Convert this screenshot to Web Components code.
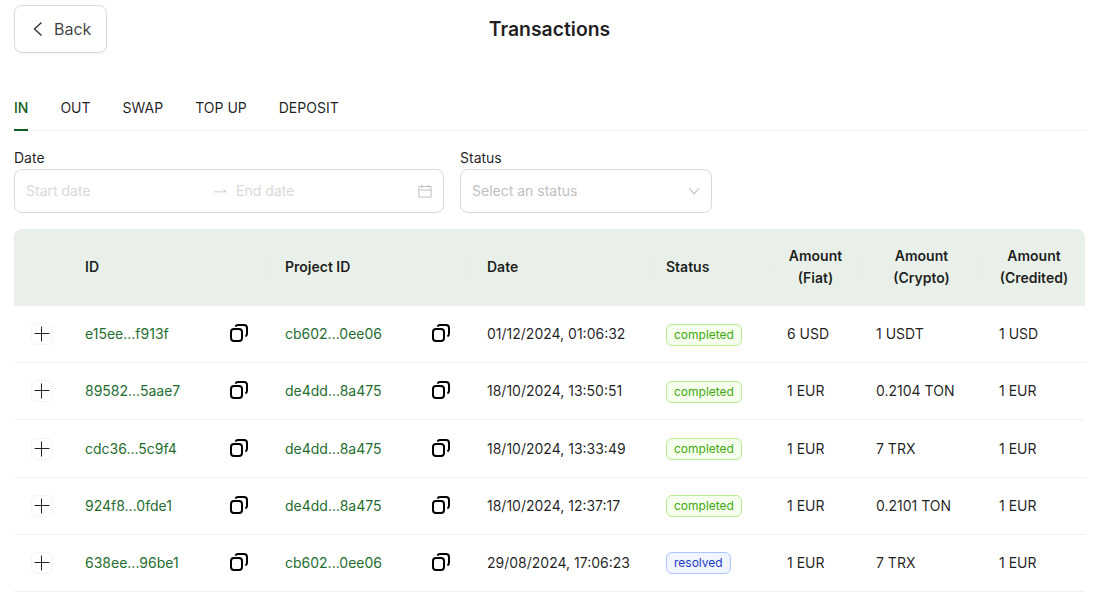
<!DOCTYPE html>
<html>
<head>
<meta charset="utf-8">
<title>Transactions</title>
<style>
  html, body { margin: 0; background: #fff; }
  body { font: 14px/22px Inter, "Liberation Sans", sans-serif; color: rgba(0, 0, 0, 0.88); overflow: hidden; }
</style>
</head>
<body>
<tx-page>
  <page-header title="Transactions"></page-header>
  <tab-bar tabs="IN,OUT,SWAP,TOP UP,DEPOSIT" active="IN"></tab-bar>
  <filter-bar></filter-bar>
  <tx-table>
    <tx-row tx="e15ee...f913f" project="cb602...0ee06" date="01/12/2024, 01:06:32" status="completed" fiat="6 USD" crypto="1 USDT" credited="1 USD"></tx-row>
    <tx-row tx="89582...5aae7" project="de4dd...8a475" date="18/10/2024, 13:50:51" status="completed" fiat="1 EUR" crypto="0.2104 TON" credited="1 EUR"></tx-row>
    <tx-row tx="cdc36...5c9f4" project="de4dd...8a475" date="18/10/2024, 13:33:49" status="completed" fiat="1 EUR" crypto="7 TRX" credited="1 EUR"></tx-row>
    <tx-row tx="924f8...0fde1" project="de4dd...8a475" date="18/10/2024, 12:37:17" status="completed" fiat="1 EUR" crypto="0.2101 TON" credited="1 EUR"></tx-row>
    <tx-row tx="638ee...96be1" project="cb602...0ee06" date="29/08/2024, 17:06:23" status="resolved" fiat="1 EUR" crypto="7 TRX" credited="1 EUR"></tx-row>
  </tx-table>
</tx-page>

<script>
const COLUMNS = '55px 200px 202px 179px 121px 89px 123px 102px';

class TxPage extends HTMLElement {
  connectedCallback() {
    this.attachShadow({ mode: 'open' });
    this.shadowRoot.innerHTML = `
      <style>
        :host { display: block; padding: 5px 13px 0 14px; }
      </style>
      <slot></slot>
    `;
  }
}
customElements.define('tx-page', TxPage);

class PageHeader extends HTMLElement {
  connectedCallback() {
    this.attachShadow({ mode: 'open' });
    this.shadowRoot.innerHTML = `
      <style>
        :host { display: grid; grid-template-columns: 1fr auto 1fr; align-items: center; height: 48px; }
        button {
          justify-self: start;
          display: flex;
          align-items: center;
          gap: 8px;
          width: 93px;
          height: 48px;
          padding: 0 0 0 15px;
          box-sizing: border-box;
          background: #fff;
          border: 1px solid #d9d9d9;
          border-radius: 8px;
          box-shadow: 0 2px 0 rgba(0, 0, 0, 0.02);
          font: 16px Inter, sans-serif;
          color: rgba(0, 0, 0, 0.75);
        }
        svg { display: block; }
        h1 { margin: 0; font: 600 19.4px/28px Inter, sans-serif; color: rgba(0, 0, 0, 0.88); }
      </style>
      <button>
        <svg width="16" height="16" viewBox="0 0 16 16" fill="none" stroke="#333" stroke-width="1.4"><path d="M11.5 1.5 4.5 8l7 6.5"/></svg>
        Back
      </button>
      <h1>${this.getAttribute('title')}</h1>
    `;
  }
}
customElements.define('page-header', PageHeader);

class TabBar extends HTMLElement {
  connectedCallback() {
    const active = this.getAttribute('active');
    const tabs = this.getAttribute('tabs').split(',').map(t =>
      `<a class="${t === active ? 'on' : ''}">${t}</a>`).join('');
    this.attachShadow({ mode: 'open' });
    this.shadowRoot.innerHTML = `
      <style>
        :host { display: flex; gap: 32px; height: 47px; margin-top: 31px; box-sizing: border-box; border-bottom: 1px solid #f0f0f0; }
        a { display: block; height: 47px; box-sizing: border-box; padding-top: 13px; font-size: 14px; line-height: 22px; color: rgba(0, 0, 0, 0.88); }
        a.on { color: #0f5c24; font-weight: 500; border-bottom: 2px solid #0f5c24; }
      </style>
      ${tabs}
    `;
  }
}
customElements.define('tab-bar', TabBar);

class FilterBar extends HTMLElement {
  connectedCallback() {
    this.attachShadow({ mode: 'open' });
    this.shadowRoot.innerHTML = `
      <style>
        :host { display: flex; gap: 16px; margin: 16px 0; }
        label { display: block; font-size: 14px; line-height: 22px; }
        .box {
          display: flex;
          align-items: center;
          height: 44px;
          box-sizing: border-box;
          padding: 0 11px;
          border: 1px solid #d9d9d9;
          border-radius: 8px;
          background: #fff;
        }
        .date { width: 430px; }
        .status { width: 252px; }
        .start { width: 187px; color: #d9d9d9; }
        .end { flex: 1; margin-left: 8px; color: #d9d9d9; }
        .ph { flex: 1; color: #bfbfbf; }
        svg { display: block; flex: none; }
      </style>
      <div>
        <label>Date</label>
        <div class="box date">
          <span class="start">Start date</span>
          <svg width="15" height="14" viewBox="0 0 15 14" fill="#bfbfbf"><path d="M1 7.5h11.2L10 5.2l.6-.1 3.2 3.1H1z"/></svg>
          <span class="end">End date</span>
          <svg width="14" height="14" viewBox="0 0 14 14" fill="none" stroke="#bfbfbf"><path d="M.9 2.5h12.2v10.6H.9zM.9 6h12.2M3.8.8v3M10.2.8v3"/></svg>
        </div>
      </div>
      <div>
        <label>Status</label>
        <div class="box status">
          <span class="ph">Select an status</span>
          <svg width="12" height="12" viewBox="0 0 12 12" fill="none" stroke="#bfbfbf" stroke-width="1.1"><path d="M1.2 3 6 8.8 11.2 3"/></svg>
        </div>
      </div>
    `;
  }
}
customElements.define('filter-bar', FilterBar);

class TxTable extends HTMLElement {
  connectedCallback() {
    this.attachShadow({ mode: 'open' });
    this.shadowRoot.innerHTML = `
      <style>
        :host { display: block; }
        .head {
          display: grid;
          grid-template-columns: ${COLUMNS};
          align-items: center;
          height: 77px;
          background: #e9f0e9;
          border-radius: 8px 8px 0 0;
          font-weight: 600;
          color: rgba(0, 0, 0, 0.88);
        }
        .head div { padding: 0 16px 2px; position: relative; }
        .head div + div + div::before {
          content: '';
          position: absolute;
          left: -1px;
          top: 50%;
          width: 1px;
          height: 22px;
          transform: translateY(-50%);
          background: #e8efe8;
        }
        .c { text-align: center; }
      </style>
      <div class="head">
        <div></div>
        <div>ID</div>
        <div>Project ID</div>
        <div>Date</div>
        <div>Status</div>
        <div class="c">Amount (Fiat)</div>
        <div class="c">Amount (Crypto)</div>
        <div class="c">Amount (Credited)</div>
      </div>
      <slot></slot>
    `;
  }
}
customElements.define('tx-table', TxTable);

class StatusTag extends HTMLElement {
  connectedCallback() {
    this.attachShadow({ mode: 'open' });
    this.shadowRoot.innerHTML = `
      <style>
        :host {
          display: inline-block;
          height: 22px;
          box-sizing: border-box;
          padding: 0 7px;
          border: 1px solid #b7eb8f;
          border-radius: 6px;
          background: #f6ffed;
          color: #43a812;
          font-size: 12px;
          line-height: 20px;
        }
        :host([kind="resolved"]) { border-color: #adc6ff; background: #f0f5ff; color: #1d39c4; }
      </style>
      <slot></slot>
    `;
  }
}
customElements.define('status-tag', StatusTag);

class TxRow extends HTMLElement {
  connectedCallback() {
    const a = n => this.getAttribute(n);
    const copy = `<svg class="copy" width="18" height="18" viewBox="0 0 18 18" fill="none" stroke="#000" stroke-width="2"><rect x="1" y="5" width="11" height="12" rx="3"/><path d="M5.5 2.6C5.9 1.6 6.8 1 8 1h6a3 3 0 0 1 3 3v5.8c0 1.2-.6 2.2-1.6 2.6"/></svg>`;
    this.attachShadow({ mode: 'open' });
    this.shadowRoot.innerHTML = `
      <style>
        :host {
          display: grid;
          grid-template-columns: ${COLUMNS};
          align-items: center;
          height: 57.2px;
          box-sizing: border-box;
          border-bottom: 1px solid #f0f0f0;
        }
        .cell { padding: 0.2px 16px 0; min-width: 0; }
        .expand { padding-left: 17px; padding-right: 0; }
        .expand span {
          display: flex;
          align-items: center;
          justify-content: center;
          width: 22px;
          height: 22px;
          box-sizing: border-box;
          border: 1px solid #f4f4f4;
          border-radius: 6px;
        }
        svg { display: block; flex: none; }
        .copy { margin-bottom: 2px; }
        .id { display: flex; align-items: center; justify-content: space-between; padding-right: 21px; }
        .id a { color: #1f6e30; }
      </style>
      <div class="cell expand"><span><svg width="16" height="16" viewBox="0 0 16 16" stroke="#222" stroke-width="1"><path d="M7.5 .5v15M.5 7.5h15"/></svg></span></div>
      <div class="cell id"><a>${a('tx')}</a>${copy}</div>
      <div class="cell id"><a>${a('project')}</a>${copy}</div>
      <div class="cell">${a('date')}</div>
      <div class="cell"><status-tag kind="${a('status')}">${a('status')}</status-tag></div>
      <div class="cell">${a('fiat')}</div>
      <div class="cell">${a('crypto')}</div>
      <div class="cell">${a('credited')}</div>
    `;
  }
}
customElements.define('tx-row', TxRow);
</script>
</body>
</html>
